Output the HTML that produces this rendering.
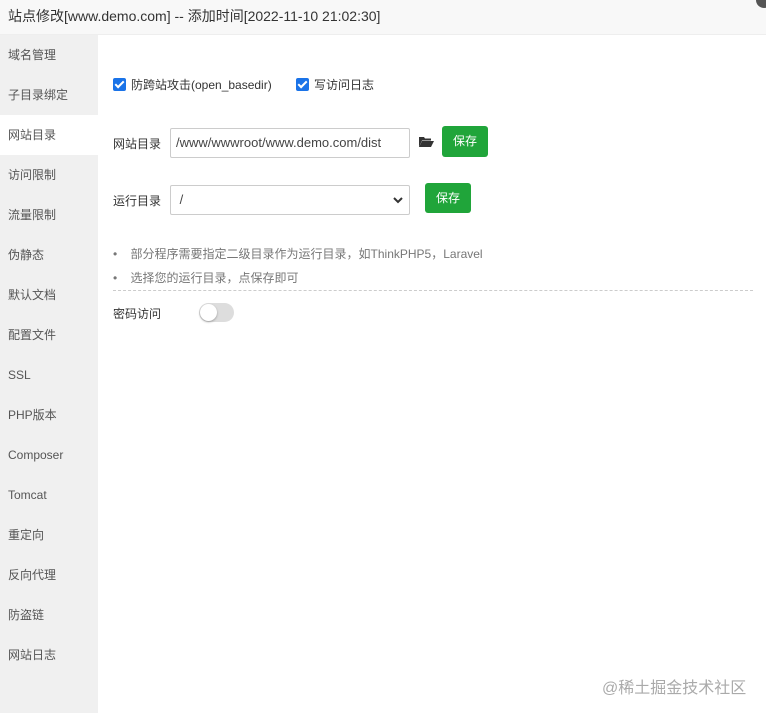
<!DOCTYPE html>
<html><head><meta charset="utf-8"><style>
*{margin:0;padding:0;box-sizing:border-box}
body{width:766px;height:713px;overflow:hidden;background:#fff;font-family:"Liberation Sans","Noto Sans CJK SC",sans-serif;color:#333;font-size:12px;position:relative}
.title{position:absolute;left:0;top:0;width:766px;height:35px;background:#f8f8f8;border-bottom:1px solid #eee;font-size:14px;line-height:32px;padding-left:8px;color:#333}
.close{position:absolute;right:-6px;top:-8px;width:16px;height:16px;border-radius:50%;background:#555}
.side{position:absolute;left:0;top:35px;width:98px;height:678px;background:#f0f0f0}
.side div{height:40px;line-height:40px;padding-left:8px;font-size:12px;color:#555}
.side div.on{background:#fff}
.a{position:absolute}
.cb{display:inline-block;width:13px;height:13px;background:#1a73e8;border-radius:2px;vertical-align:-2px;position:relative;margin-right:5px}
.cb:after{content:"";position:absolute;left:4px;top:1px;width:3px;height:7px;border:solid #fff;border-width:0 2px 2px 0;transform:rotate(45deg)}
.inp{border:1px solid #ccc;height:30px;line-height:28px;padding-left:5px;font-size:13px;color:#444;border-radius:2px}
.btn{background:#20a53a;color:#fff;border-radius:3px;text-align:center;font-size:12px}
.tip{color:#777;font-size:12px}
</style></head><body>
<div class="title">站点修改[www.demo.com] -- 添加时间[2022-11-10 21:02:30]</div>
<div class="close"></div>
<div class="side">
<div>域名管理</div><div>子目录绑定</div><div class="on">网站目录</div><div>访问限制</div><div>流量限制</div><div>伪静态</div><div>默认文档</div><div>配置文件</div><div>SSL</div><div>PHP版本</div><div>Composer</div><div>Tomcat</div><div>重定向</div><div>反向代理</div><div>防盗链</div><div>网站日志</div>
</div>
<div class="a" style="left:113px;top:76px;font-size:12px"><span class="cb"></span>防跨站攻击(open_basedir)</div>
<div class="a" style="left:296px;top:76px;font-size:12px"><span class="cb"></span>写访问日志</div>
<div class="a" style="left:113px;top:135px">网站目录</div>
<div class="a inp" style="left:170px;top:128px;width:240px">/www/wwwroot/www.demo.com/dist</div>
<svg class="a" style="left:419px;top:136px" width="15" height="12" viewBox="0 0 15 12"><path d="M0 1h5l1 1.5h6v2H3L0 11z" fill="#333"/><path d="M3 5h12l-3 6H0z" fill="#333"/></svg>
<div class="a btn" style="left:442px;top:126px;width:46px;height:31px;line-height:31px">保存</div>
<div class="a" style="left:113px;top:192px">运行目录</div>
<div class="a inp" style="left:170px;top:185px;width:240px">&nbsp;/</div>
<svg class="a" style="left:393px;top:196px" width="10" height="8" viewBox="0 0 10 8"><path d="M1 2l4 4 4-4" stroke="#333" stroke-width="2" fill="none"/></svg>
<div class="a btn" style="left:425px;top:183px;width:46px;height:30px;line-height:30px">保存</div>
<div class="a tip" style="left:113px;top:245px">•&nbsp;&nbsp;&nbsp;&nbsp;部分程序需要指定二级目录作为运行目录，如ThinkPHP5，Laravel</div>
<div class="a tip" style="left:113px;top:269px">•&nbsp;&nbsp;&nbsp;&nbsp;选择您的运行目录，点保存即可</div>
<div class="a" style="left:113px;top:290px;width:640px;border-top:1px dashed #ccc"></div>
<div class="a" style="left:113px;top:305px">密码访问</div>
<div class="a" style="left:199px;top:303px;width:35px;height:19px;border-radius:10px;background:#ddd"><div style="position:absolute;left:1px;top:1px;width:17px;height:17px;border-radius:50%;background:#fff;box-shadow:0 1px 2px rgba(0,0,0,.3)"></div></div>
<div class="a" style="left:602px;top:674px;font-size:16px;color:#aaa">@稀土掘金技术社区</div>
</body></html>
